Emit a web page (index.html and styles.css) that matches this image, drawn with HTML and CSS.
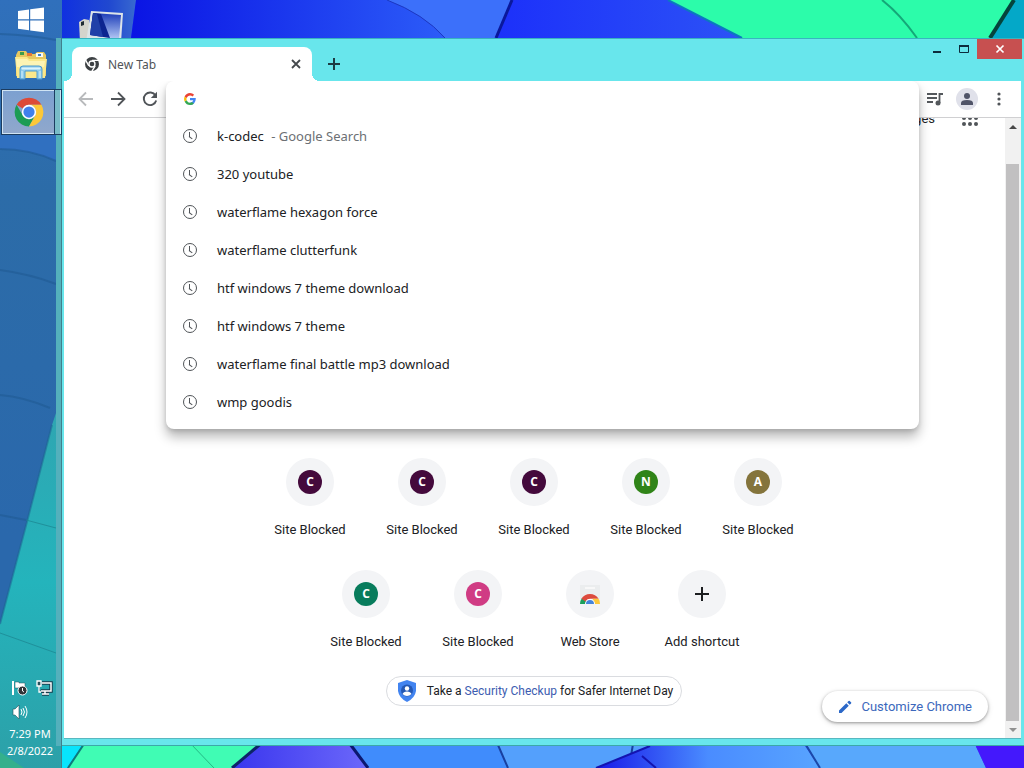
FILE: index.html
```html
<!DOCTYPE html>
<html lang="en">
<head>
<meta charset="utf-8">
<title>New Tab</title>
<link rel="stylesheet" href="styles.css">
</head>
<body>

<svg class="wallpaper" viewBox="0 0 1024 768" preserveAspectRatio="none" aria-hidden="true">
  <defs>
    <linearGradient id="sky1"><stop offset="0" stop-color="#0a14e4"/><stop offset="1" stop-color="#2c5cf8"/></linearGradient>
    <linearGradient id="sky2"><stop offset="0" stop-color="#1c30fa"/><stop offset="1" stop-color="#2c52f6"/></linearGradient>
    <linearGradient id="sky3"><stop offset="0" stop-color="#3a36ee"/><stop offset="1" stop-color="#6c68fa"/></linearGradient>
    <linearGradient id="sky4"><stop offset="0" stop-color="#1818e8"/><stop offset="0.5" stop-color="#4a8cff"/><stop offset="1" stop-color="#58a4ff"/></linearGradient>
    <linearGradient id="sky5"><stop offset="0.45" stop-color="#1030e0"/><stop offset="0.8" stop-color="#2048d0"/><stop offset="1" stop-color="#3868d0"/></linearGradient>
  </defs>
  <rect width="1024" height="768" fill="#2850f8"/>
  <path d="M0 0H136L131 38H0z" fill="url(#sky5)"/>
  <path d="M136 0H387Q424 14 445 38H131z" fill="url(#sky1)"/>
  <path d="M387 0H512L496 38H445Q424 14 387 0z" fill="#3c70fa"/>
  <path d="M387 0Q424 14 445 38" fill="none" stroke="#1c38c0"/>
  <path d="M512 0H668L742 38H496z" fill="url(#sky2)"/>
  <path d="M512 0L496 38" stroke="#0a189c" stroke-width="3"/>
  <path d="M668 0H1014L990 38H742z" fill="#2cfcaa"/>
  <path d="M668 0L742 38" stroke="#0c78c0" stroke-width="2"/>
  <path d="M882 0Q900 14 917 38" fill="none" stroke="#14a878" stroke-width="2"/>
  <path d="M1014 0H1024V38H990z" fill="#04a8c8"/>
  <path d="M1014 0L990 38" stroke="#04443c" stroke-width="4"/>

  <path d="M0 740H86L67 768H0z" fill="#08e4fc"/>
  <path d="M87 740H266L232 768H68z" fill="#40fcb4"/>
  <path d="M84 744L68 768" stroke="#0c7c7c" stroke-width="2"/>
  <path d="M190 743L214 768" stroke="#24b884"/>
  <path d="M266 740H348L369 768H232z" fill="url(#sky3)"/>
  <path d="M264 741L232 768" stroke="#0c2468" stroke-width="3"/>
  <path d="M348 740H496L508 768H369z" fill="#408cfc"/>
  <path d="M350 744L368 768" stroke="#0c1870" stroke-width="3"/>
  <path d="M496 740H652L652 746L596 768H508z" fill="#54a0fc"/>
  <path d="M498 745L508 768M633 744L631 756" stroke="#1840a0" stroke-width="2"/>
  <path d="M596 768L650 746H805L820 768z" fill="url(#sky4)"/>
  <path d="M596 768L650 746M642 756L656 768" fill="none" stroke="#1414b0" stroke-width="2"/>
  <path d="M804 740H973L986 768H820z" fill="#58a8fc"/>
  <path d="M806 745L820 768" stroke="#1c48a8" stroke-width="2"/>
  <path d="M973 740H1024V768H986z" fill="#4418fc"/>
</svg>

<nav class="taskbar" aria-label="Taskbar">
  <svg class="taskbar-glass" viewBox="0 0 62 768" preserveAspectRatio="none" aria-hidden="true">
    <defs>
      <linearGradient id="glass" x2="0" y2="1"><stop offset="0" stop-color="#3070bc"/><stop offset="0.25" stop-color="#2c6ca8"/><stop offset="0.7" stop-color="#2a68ac"/></linearGradient>
      <linearGradient id="teal" x2="0" y2="1"><stop offset="0" stop-color="#30a4b0"/><stop offset="0.5" stop-color="#24b4bc"/><stop offset="1" stop-color="#2ca0a8"/></linearGradient>
    </defs>
    <rect width="62" height="768" fill="url(#glass)"/>
    <path d="M0 135H56V161Q30 149 0 149z" fill="#3070c0"/>
    <path d="M0 149Q30 149 56 161M0 270Q30 274 56 284M0 395Q24 397 50 408M0 34Q30 35 56 40M0 515L26 520" fill="none" stroke="#1e5890" stroke-width="2" opacity="0.5"/>
    <path d="M62 395L52 425L28 518L0 624V768H62z" fill="url(#teal)"/>
    <path d="M52 425L28 518L0 624" fill="none" stroke="#1c6490" stroke-width="2" opacity="0.5"/>
    <path d="M26 520L56 528M0 633L56 653" stroke="#1c8490" opacity="0.7"/>
    <path d="M0 752L24 768H0z" fill="#34b08c"/>
    <rect x="56" y="38" width="6" height="708" fill="#54b0bc"/>
    <path d="M61.500 38V768" stroke="#40808c"/>
  </svg>

  <button class="task" aria-label="Start">
    <svg width="28" height="26" viewBox="0 0 28 26" fill="#fff"><path d="M1 4L12 2.500V12.300H1zM13.200 2.300L27 .5V12.300H13.200zM1 13.500H12V23.300L1 21.800zM13.200 13.500H27V25.300L13.200 23.500z"/></svg>
  </button>
  <button class="task explorer" aria-label="File Explorer">
    <svg width="34" height="32" viewBox="0 0 34 32">
      <path d="M2 6L4 2H12L14 5H21L23 3H30L32 6V27H2z" fill="#e6c860"/>
      <path d="M6 3h4v3H6z" fill="#3c9c4c"/><path d="M13 4h5v3h-5z" fill="#e47838"/><path d="M22 4h7v4h-7z" fill="#f6fafc"/><path d="M24 5h3v2h-3z" fill="#4080c8"/>
      <path d="M1 8H13L15 10H33L31 29H3z" fill="#fbe88c"/>
      <path d="M2 10H13L15 12H31L30 18H3z" fill="#fdf4b4"/>
      <path d="M6 20Q6 17 9 17H25Q28 17 28 20V30H23V22H11V30H6z" fill="#90ccec" stroke="#4c9cd0"/>
      <path d="M8 19H26V20H8zM8 22V29M26 22V29" fill="#e4f8ff" stroke="#d8f2fc"/>
    </svg>
  </button>
  <button class="task active" aria-label="Google Chrome">
    <svg width="30" height="30" viewBox="0 0 48 48">
      <path d="M4.100 12.500A23 23 0 0 1 43.900 12.500H24A11.500 11.500 0 0 0 14 18.300z" fill="#dc4a38"/>
      <path d="M4.100 12.500A23 23 0 0 0 24 47L34 29.700A11.500 11.500 0 0 1 14 29.700z" fill="#1c9c54"/>
      <path d="M43.900 12.500A23 23 0 0 1 24 47L34 29.700A11.500 11.500 0 0 0 24 12.500z" fill="#fcc838"/>
      <circle cx="24" cy="24" r="11.500" fill="#fff"/><circle cx="24" cy="24" r="9" fill="#4080ec"/>
    </svg>
  </button>

  <div class="tray">
    <div class="tray-icons">
      <svg width="18" height="18" viewBox="0 0 18 18" role="img" aria-label="Action Center"><path d="M2 2V16" stroke="#fff" stroke-width="2"/><path d="M4 3H8V4H14V9H4z" fill="#fff" stroke="#24505c" stroke-width=".5"/><circle cx="11.500" cy="11.500" r="4.500" fill="#303438" stroke="#fff"/><path d="M11.500 9V12L13 13" fill="none" stroke="#fff"/></svg>
      <svg width="18" height="18" viewBox="0 0 18 18" role="img" aria-label="Network"><path d="M7 4H16V12H6M10 12V15M7 15H14" fill="none" stroke="#183c4c" stroke-width="3.500"/><path d="M7 4H16V12H6M10 12V15M7 15H14" fill="none" stroke="#fff" stroke-width="1.500"/><path d="M2 2H6V7H2zM4 7V13H6" fill="#24505c" stroke="#fff" stroke-width="1.300"/></svg>
      <svg width="18" height="18" viewBox="0 0 18 18" role="img" aria-label="Volume"><path d="M2 6H4L8 2V16L4 12H2z" fill="#fff" stroke="#24505c" stroke-width=".6"/><path d="M10 6Q12 9 10 12M12 5Q15 9 12 13M14 3Q18 9 14 15" fill="none" stroke="#fff"/></svg>
    </div>
    <time>7:29 PM<br>2/8/2022</time>
  </div>
</nav>

<main class="desktop">
  <svg class="computer" width="48" height="32" viewBox="0 0 48 32" aria-hidden="true">
    <defs>
      <linearGradient id="screen" x2="0" y2="1"><stop offset="0" stop-color="#1c3cb8"/><stop offset="1" stop-color="#b4c8f4"/></linearGradient>
    </defs>
    <path d="M1 12L6 9L11 10V32H2z" fill="#d4d4cc"/><path d="M3 12L6 11V15L3 16z" fill="#202c34"/>
    <path d="M13 1L45 3L43 32H8z" fill="#dce4e8"/>
    <path d="M15 3L43 5L41 29L12 25z" fill="url(#screen)"/><path d="M15 3L23 4L32 28L12 25z" fill="#0c2490"/><path d="M15 3L19 4L25 27L12 25z" fill="#2040a8"/>
  </svg>

  <section class="window">
    <header class="titlebar">
      <div class="tab">
        <svg width="16" height="16" viewBox="0 0 48 48">
          <circle cx="24" cy="24" r="21" fill="#3c4043"/><circle cx="24" cy="24" r="9" fill="none" stroke="#fff" stroke-width="4"/>
          <path d="M24 13H45M14.500 29.500L4 11M33.500 29.500L23 47" stroke="#fff" stroke-width="4"/>
        </svg>
        <span class="tab-title">New Tab</span>
        <button class="tab-close" aria-label="Close tab"><svg width="10" height="10" viewBox="0 0 10 10"><path d="M1 1L9 9M9 1L1 9" stroke="#44484c" stroke-width="1.800"/></svg></button>
      </div>
      <button class="new-tab" aria-label="New tab"><svg width="14" height="14" viewBox="0 0 14 14"><path d="M7 1V13M1 7H13" stroke="#1c3c44" stroke-width="2"/></svg></button>
      <div class="controls">
        <button aria-label="Minimize"><svg width="12" height="12" viewBox="0 0 12 12"><path d="M2 9H10" stroke="#0c2c3c" stroke-width="2"/></svg></button>
        <button aria-label="Maximize"><svg width="12" height="12" viewBox="0 0 12 12"><path d="M1.500 2.500H10.500V9.500H1.500z" fill="none" stroke="#0c2c3c"/><path d="M1 3H11" stroke="#0c2c3c" stroke-width="2"/></svg></button>
        <button class="close" aria-label="Close"><svg width="10" height="10" viewBox="0 0 10 10"><path d="M1.500 1.500L8.500 8.500M8.500 1.500L1.500 8.500" stroke="#fff" stroke-width="1.700"/></svg></button>
      </div>
    </header>

    <div class="client">
      <div class="toolbar">
        <button aria-label="Back"><svg width="16" height="16" viewBox="0 0 16 16"><path d="M15 8H2M8 1.500L1.500 8L8 14.500" fill="none" stroke="#b8babc" stroke-width="1.800"/></svg></button>
        <button aria-label="Forward"><svg width="16" height="16" viewBox="0 0 16 16"><path d="M1 8H14M8 1.500L14.500 8L8 14.500" fill="none" stroke="#505458" stroke-width="1.800"/></svg></button>
        <button aria-label="Reload"><svg width="16" height="16" viewBox="0 0 16 16"><path d="M13.500 4.500A6.300 6.300 0 1 0 14.200 9.500" fill="none" stroke="#505458" stroke-width="1.900"/><path d="M15 .8V7H8.800z" fill="#505458"/></svg></button>
        <span class="spacer"></span>
        <button aria-label="Media"><svg width="18" height="16" viewBox="0 0 18 16"><path d="M1 3H11M1 7H11M1 11H7" stroke="#54585c" stroke-width="1.800"/><path d="M13.500 12V3H17" fill="none" stroke="#54585c" stroke-width="1.800"/><circle cx="12" cy="12" r="2.500" fill="#54585c"/></svg></button>
        <button aria-label="Profile"><svg width="22" height="22" viewBox="0 0 22 22"><circle cx="11" cy="11" r="11" fill="#e0e1ea"/><circle cx="11" cy="8" r="3" fill="#505468"/><path d="M5 17V15Q5 12 11 12T17 15V17z" fill="#505468"/></svg></button>
        <button aria-label="Menu"><svg width="4" height="14" viewBox="0 0 4 14" fill="#505458"><circle cx="2" cy="2" r="1.600"/><circle cx="2" cy="7" r="1.600"/><circle cx="2" cy="12" r="1.600"/></svg></button>
      </div>

      <div class="page">
        <div class="ntp">
          <div class="ntp-links">
            <a href="#">Images</a>
            <button class="apps" aria-label="Google apps"><svg width="18" height="18" viewBox="0 0 18 18" fill="#505458"><circle cx="3" cy="3" r="2"/><circle cx="9" cy="3" r="2"/><circle cx="15" cy="3" r="2"/><circle cx="3" cy="9" r="2"/><circle cx="9" cy="9" r="2"/><circle cx="15" cy="9" r="2"/><circle cx="3" cy="15" r="2"/><circle cx="9" cy="15" r="2"/><circle cx="15" cy="15" r="2"/></svg></button>
          </div>

          <div class="shortcuts">
            <a class="tile" href="#"><span class="circle"><b class="letter plum">C</b></span>Site Blocked</a>
            <a class="tile" href="#"><span class="circle"><b class="letter plum">C</b></span>Site Blocked</a>
            <a class="tile" href="#"><span class="circle"><b class="letter plum">C</b></span>Site Blocked</a>
            <a class="tile" href="#"><span class="circle"><b class="letter green">N</b></span>Site Blocked</a>
            <a class="tile" href="#"><span class="circle"><b class="letter olive">A</b></span>Site Blocked</a>
            <a class="tile" href="#"><span class="circle"><b class="letter teal">C</b></span>Site Blocked</a>
            <a class="tile" href="#"><span class="circle"><b class="letter pink">C</b></span>Site Blocked</a>
            <a class="tile" href="#"><span class="circle"><svg width="24" height="24" viewBox="0 0 24 24">
              <path d="M2 3H22V22H2z" fill="#ebedee"/><path d="M7 6H17" stroke="#f8f8f8" stroke-width="2"/>
              <path d="M2 22A10 10 0 0 1 4 16L9 19L7.500 22z" fill="#1ca05c"/>
              <path d="M3.400 16.800A10 10 0 0 1 20.600 16.800H12A5 5 0 0 0 7.500 19.500z" fill="#dc4a3c"/>
              <path d="M20.600 16.800A10 10 0 0 1 22 22H16.500L14.500 16.800z" fill="#fcc83c"/>
              <path d="M7 22A5 5 0 0 1 17 22z" fill="#fff"/><path d="M8 22A4 4 0 0 1 16 22z" fill="#4484dc"/>
            </svg></span>Web Store</a>
            <button class="tile"><span class="circle"><svg width="14" height="14" viewBox="0 0 14 14"><path d="M7 0V14M0 7H14" stroke="#1c1e20" stroke-width="2"/></svg></span>Add shortcut</button>
          </div>

          <p class="promo">
            <svg width="20" height="22" viewBox="0 0 20 22"><path d="M10 0L19 3V11Q18 18 10 22Q2 18 1 11V3z" fill="#4284f0"/><circle cx="10" cy="10.500" r="6" fill="#2458b4"/><circle cx="10" cy="8.500" r="2.200" fill="#fff"/><path d="M5.500 14Q6.500 11.500 10 11.500T14.500 14Q12.500 16 10 16T5.500 14z" fill="#fff"/></svg>
            <span>Take a <a href="#">Security Checkup</a> for Safer Internet Day</span>
          </p>

          <button class="customize">
            <svg width="14" height="14" viewBox="0 0 14 14" fill="#2c68c8"><path d="M1 10.500V13H3.500L10.800 5.700L8.300 3.200zM9.200 2.300L10.600 .9Q11.200 .5 11.700 .9L13.100 2.300Q13.500 2.800 13.100 3.400L11.700 4.800z"/></svg>
            Customize Chrome
          </button>
        </div>

        <div class="scrollbar">
          <button aria-label="Scroll up"><svg width="8" height="4" viewBox="0 0 8 4"><path d="M0 4L4 0L8 4z" fill="#484848"/></svg></button>
          <div class="thumb"></div>
          <button aria-label="Scroll down"><svg width="8" height="4" viewBox="0 0 8 4"><path d="M0 0L4 4L8 0z" fill="#909090"/></svg></button>
        </div>
      </div>

      <div class="omnibox">
        <div class="omnibox-input">
          <svg width="12" height="12" viewBox="0 0 48 48"><path d="M24 19.500V28.500H37Q35 38 24 38.500V48Q46 46 47 24V19.500z" fill="#4285f4"/><path d="M2.500 34L10.500 28.500Q15 38.500 24 38.500Q29 38.500 32 36L39.500 42.500Q33 48 24 48Q9 48 2.500 34z" fill="#34a853"/><path d="M2.500 34Q-2 24 2.500 14L10.500 20Q9 24 10.500 28.500z" fill="#fbbc05"/><path d="M2.500 14Q9 0 24 0Q34 0 40.500 7L34 13.500Q30 9.500 24 9.500Q14 9.500 10.500 20z" fill="#ea4335"/></svg>
          <input type="text" aria-label="Search Google or type a URL">
        </div>
        <ul class="suggestions">
          <li><a href="#"><i class="clock"></i>k-codec <span>- Google Search</span></a></li>
          <li><a href="#"><i class="clock"></i>320 youtube</a></li>
          <li><a href="#"><i class="clock"></i>waterflame hexagon force</a></li>
          <li><a href="#"><i class="clock"></i>waterflame clutterfunk</a></li>
          <li><a href="#"><i class="clock"></i>htf windows 7 theme download</a></li>
          <li><a href="#"><i class="clock"></i>htf windows 7 theme</a></li>
          <li><a href="#"><i class="clock"></i>waterflame final battle mp3 download</a></li>
          <li><a href="#"><i class="clock"></i>wmp goodis</a></li>
        </ul>
      </div>
    </div>
  </section>
</main>

</body>
</html>
```
FILE: styles.css
```css
* { box-sizing: border-box; }
body { margin: 0; height: 100vh; display: flex; overflow: hidden; font-family: "Noto Sans", "Open Sans", sans-serif; font-size: 13px; color: #202124; }
button { border: 0; padding: 0; background: none; font: inherit; color: inherit; display: flex; align-items: center; justify-content: center; cursor: pointer; }
a { color: inherit; text-decoration: none; }
svg { display: block; flex: none; }

.wallpaper { position: absolute; width: 100%; height: 100%; }

/* taskbar */
.taskbar { position: relative; width: 62px; display: flex; flex-direction: column; color: #fff; }
.taskbar-glass { position: absolute; width: 100%; height: 100%; }
.task { position: relative; height: 40px; }
.task.explorer { height: 49px; }
.task.active { height: 46px; margin: 0 0 0 1px; padding-right: 6px; border: 1px solid #1c3c60; background: linear-gradient(#7ca0d0, #90a8cc); box-shadow: inset 0 0 0 1px #d0e4f4; }
.task.active::after { content: ""; position: absolute; top: 0; bottom: 0; right: 0; width: 5px; background: #78bcc8; border-left: 1px solid #1c3c60; border-right: 1px solid #d0e4f4; }
.tray { position: relative; margin-top: auto; padding-bottom: 9px; }
.tray-icons { display: flex; flex-wrap: wrap; gap: 6px; padding: 0 8px 4px 11px; }
.tray time { display: block; font-size: 11px; line-height: 17px; text-align: center; padding-right: 2px; }

/* desktop and window */
.desktop { position: relative; flex: 1; min-width: 0; display: flex; padding: 38px 0 22px; }
.computer { position: absolute; left: 16px; top: 10px; }
.window { position: relative; flex: 1; min-width: 0; display: flex; flex-direction: column; padding: 0 2px 7px; background: #68e6ec; border-top: 1px solid #38b4c0; border-bottom: 1px solid #3ca8a8; }
.titlebar { height: 42px; display: flex; align-items: flex-end; padding-left: 8px; }
.tab { position: relative; width: 240px; height: 34px; display: flex; align-items: center; padding: 0 8px 0 12px; background: #fff; border-radius: 8px 8px 0 0; color: #505458; }
.tab::before, .tab::after { content: ""; position: absolute; bottom: 0; width: 8px; height: 8px; }
.tab::before { left: -8px; background: radial-gradient(circle at 0 0, transparent 8px, #fff 8px); }
.tab::after { right: -8px; background: radial-gradient(circle at 100% 0, transparent 8px, #fff 8px); }
.tab-title { flex: 1; margin-left: 8px; font-size: 12px; }
.tab-close { width: 16px; height: 16px; }
.new-tab { width: 28px; height: 34px; margin-left: 8px; }
.controls { display: flex; align-self: flex-start; margin-left: auto; }
.controls button { width: 27px; height: 20px; }
.controls .close { width: 45px; background: #c75050; }

.client { position: relative; flex: 1; min-height: 0; display: flex; flex-direction: column; margin-right: 1px; background: #fff; box-shadow: 0 1px #58b8c0; }
.toolbar { height: 37px; display: flex; padding: 0 6px; border-bottom: 1px solid #d0d0d2; }
.toolbar button { width: 32px; }
.spacer { flex: 1; }

/* new tab page */
.page { flex: 1; min-height: 0; display: flex; overflow: hidden; font-family: Roboto, sans-serif; }
.ntp { position: relative; flex: 1; display: flex; flex-direction: column; align-items: center; padding: 0 1px 32px 0; }
.ntp-links { align-self: stretch; height: 40px; margin-top: -20px; display: flex; align-items: center; justify-content: flex-end; gap: 26px; padding-right: 25px; }
.shortcuts { width: 560px; margin-top: auto; display: flex; flex-wrap: wrap; justify-content: center; }
.tile { width: 112px; height: 112px; padding-top: 12px; display: flex; flex-direction: column; align-items: center; justify-content: flex-start; line-height: 18px; }
.circle { width: 48px; height: 48px; margin-bottom: 15px; border-radius: 50%; background: #f3f4f6; display: flex; align-items: center; justify-content: center; }
.letter { width: 24px; height: 24px; border-radius: 50%; color: #fff; font: 700 12px/24px "Open Sans", sans-serif; text-align: center; }
.plum { background: #440a3c; }
.green { background: #308418; }
.olive { background: #84743c; }
.teal { background: #087c5c; }
.pink { background: #d03c84; }
.promo { height: 30px; margin: 6px 0 0; padding: 0 8px 0 10px; display: flex; align-items: center; gap: 10px; border: 1px solid #dadce0; border-radius: 15px; font-size: 12px; white-space: nowrap; }
.promo a { color: #3c5cb0; }
.customize { position: absolute; right: 17px; bottom: 16px; height: 31px; padding: 0 16px; gap: 9px; border-radius: 16px; background: #fff; color: #3c68bc; box-shadow: 0 1px 3px rgba(0, 0, 0, .35), 0 2px 6px rgba(0, 0, 0, .12); }

.scrollbar { width: 16px; display: flex; flex-direction: column; background: #f1f1f1; }
.scrollbar button { height: 17px; }
.thumb { flex: 1; margin: 29px 2px 0 1px; background: #c1c0c1; }

/* address bar with its suggestions */
.omnibox { position: absolute; top: 0; left: 102px; right: 102px; padding-bottom: 8px; background: #fff; border-radius: 8px; box-shadow: 0 8px 12px rgba(0, 0, 0, .28), 0 2px 4px rgba(0, 0, 0, .12); clip-path: inset(0 -20px -30px); }
.omnibox-input { height: 36px; display: flex; align-items: center; padding: 0 18px; }
.omnibox-input input { flex: 1; margin-left: 21px; border: 0; outline: 0; background: none; font: inherit; }
.suggestions { margin: 0; padding: 0; list-style: none; }
.suggestions a { height: 38px; display: flex; align-items: center; padding: 0 17px; white-space: pre; }
.suggestions span { margin-left: 4px; color: #6c7074; }
.clock { position: relative; width: 14px; height: 14px; margin-right: 20px; border: 1px solid #505458; border-radius: 50%; }
.clock::before { content: ""; position: absolute; left: 5px; top: 2px; width: 1px; height: 5px; background: #505458; }
.clock::after { content: ""; position: absolute; left: 5px; top: 6px; width: 4px; height: 1px; background: #505458; transform: rotate(35deg); transform-origin: left; }
```
